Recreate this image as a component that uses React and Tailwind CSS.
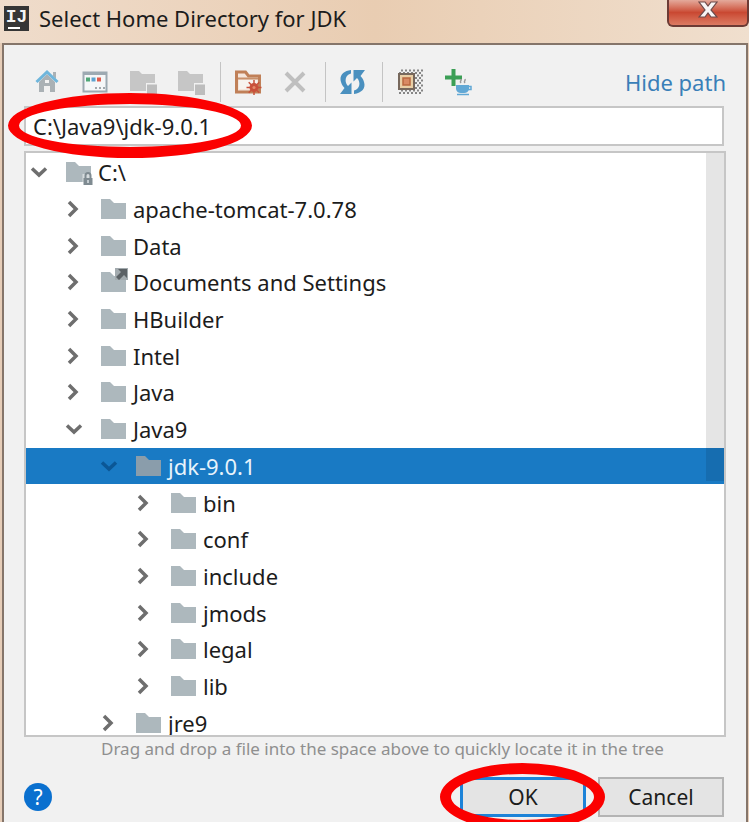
import { useState } from "react";

const ROWS = [
  { name: "C:\\", level: 0, open: true, badge: "lock" },
  { name: "apache-tomcat-7.0.78", level: 1 },
  { name: "Data", level: 1 },
  { name: "Documents and Settings", level: 1, badge: "link" },
  { name: "HBuilder", level: 1 },
  { name: "Intel", level: 1 },
  { name: "Java", level: 1 },
  { name: "Java9", level: 1, open: true },
  { name: "jdk-9.0.1", level: 2, open: true },
  { name: "bin", level: 3 },
  { name: "conf", level: 3 },
  { name: "include", level: 3 },
  { name: "jmods", level: 3 },
  { name: "legal", level: 3 },
  { name: "lib", level: 3 },
  { name: "jre9", level: 2 },
];

const INDENT = ["pl-0", "pl-[35px]", "pl-[70px]", "pl-[105px]"];

function Chevron({ open, selected }) {
  return (
    <svg
      className={`w-[26px] h-5 shrink-0 ${selected ? "text-[#0b5796]" : "text-[#6e6e6e]"}`}
      viewBox="0 0 26 20"
      fill="none"
      stroke="currentColor"
      strokeWidth={3.5}
    >
      <path d={open ? "M6 6.5l7 6.5 7-6.5" : "M8 3l7 7-7 7"} />
    </svg>
  );
}

function Folder({ badge, selected }) {
  return (
    <svg className="w-7 h-7 shrink-0" viewBox="0 0 28 28">
      <path
        d="M0 4h9l4 4h12v16H0z"
        fill={selected ? "#8a9dab" : "#adb8bd"}
      />
      {badge === "lock" && (
        <g>
          <path d="M16.500 16h10v12h-10z" fill="#fff" opacity=".5" />
          <path d="M19.500 21v-3.500a2.500 2.500 0 0 1 5 0V21" fill="none" stroke="#7f8b91" strokeWidth="2" />
          <path d="M17.500 20h9v7h-9z" fill="#7f8b91" />
          <path d="M21 22h2v3h-2z" fill="#c3cbcf" />
        </g>
      )}
      {badge === "link" && (
        <g>
          <path d="M14 0h13v12H14z" fill="#a3abaf" />
          <path d="M17 1h9v9l-3-3-5 5-3-3 5-5z" fill="#5c6266" />
        </g>
      )}
    </svg>
  );
}

function ToolButton({ label, children }) {
  return (
    <button type="button" aria-label={label} className="w-12 h-10 flex items-center justify-center">
      <svg className="w-7 h-7" viewBox="0 0 28 28" fill="none">
        {children}
      </svg>
    </button>
  );
}

function Separator() {
  return <span className="w-px h-10 mx-1 bg-[#c4c4c4]" />;
}

function GreyFolder() {
  return (
    <g fill="#c6c6c6">
      <path d="M0 3h9l3 3h13v9H16v8H0z" />
      <path d="M17 16.500h10V27H17z" fill="#bdbdbd" />
    </g>
  );
}

function Toolbar() {
  return (
    <div className="flex items-center">
      <ToolButton label="Home">
        <path d="M5 14l8-8 8 8v10h-5v-6h-6v6H5z" fill="#aab1b5" />
        <path d="M19 4h3v7l-3-3z" fill="#aab1b5" />
        <path d="M11 12h4v3h-4z" fill="#f2f2f2" />
        <path d="M2.500 14L13 4l10.500 10" stroke="#6fb6dc" strokeWidth="3" />
      </ToolButton>
      <ToolButton label="Desktop">
        <path d="M1.500 4.500h23v19h-23z" fill="#f5f7f8" stroke="#9daab2" strokeWidth="2" />
        <path d="M1 4h24v3H1z" fill="#9daab2" />
        <path d="M4 9.500h4v4H4z" fill="#4fa777" />
        <path d="M9.500 9.500h4v4h-4z" fill="#5fa3cf" />
        <path d="M15 9.500h4v4h-4z" fill="#e05b4b" />
        <path d="M13 19h2v2h-2zM17 19h2v2h-2zM21 19h2v2h-2z" fill="#a2a9ad" />
      </ToolButton>
      <ToolButton label="Project directory">
        <GreyFolder />
      </ToolButton>
      <ToolButton label="Module directory">
        <GreyFolder />
      </ToolButton>
      <Separator />
      <ToolButton label="New folder">
        <path d="M1.500 23V4h9l3 4h11v16h-23z" fill="#f5e6dc" stroke="#c08058" strokeWidth="3" />
        <path d="M3 10.500h20" stroke="#c9906b" strokeWidth="2" />
        <path d="M4 12h18v9H4z" fill="#f7f3ef" />
        <path
          d="M19 12v15M11.500 19.500h15M13.700 14.200l10.600 10.600M24.300 14.200L13.700 24.800"
          stroke="#c8503a"
          strokeWidth="1.500"
        />
        <circle cx="19" cy="19.500" r="4.500" fill="#c8503a" />
        <circle cx="19" cy="19.500" r="1.500" fill="#e58b6b" />
      </ToolButton>
      <ToolButton label="Delete">
        <path d="M3 5l18 18M21 5L3 23" stroke="#bfbfbf" strokeWidth="4" />
      </ToolButton>
      <Separator />
      <ToolButton label="Refresh">
        <path d="M11 2C3 3-1 8 1 14c.8 3 2 4.500 3.500 6L0 26h11.500V14.500L8 18C4 14 5 7 11 5.500z" fill="#4a90bf" />
        <path d="M14 26c8-1 12-6 10-12-.8-3-2-4.500-3.500-6L25 2H13.500v11.500L17 10c4 4 3 11-3 12.500z" fill="#4a90bf" />
      </ToolButton>
      <Separator />
      <ToolButton label="Show hidden files">
        <path
          d="M4 2.500h24M2 5h24M20 7.500h8M18 10h8M20 12.500h8M18 15h8M20 17.500h8M18 20h8M4 22.500h24M2 25h24"
          stroke="#858585"
          strokeWidth="2"
          strokeDasharray="2 2"
        />
        <path d="M2 6h15v15H2z" fill="#e9cfa5" stroke="#77685c" strokeWidth="2" />
        <path d="M6 10h7v7H6z" fill="#d98a63" stroke="#b9683f" strokeWidth="1.500" />
      </ToolButton>
      <ToolButton label="Add JDK">
        <path d="M8.500 1v17M0 9.500h17" stroke="#3c9f56" strokeWidth="4" />
        <path d="M11 17h13v4a5 5 0 0 1-5 4h-3a5 5 0 0 1-5-4z" fill="#62a8d5" />
        <path d="M23 18.500h3v3h-3" stroke="#62a8d5" strokeWidth="1.500" />
        <path d="M12 26.500h12" stroke="#62a8d5" strokeWidth="1.500" />
        <path d="M16 15c-2-2 1-2 0-4M20 15c-2-2 1-2 0-4" stroke="#9a9a9a" strokeWidth="1.500" />
      </ToolButton>
    </div>
  );
}

function Ring({ className }) {
  return <span className={`absolute pointer-events-none rounded-[50%] border-[11px] border-[#fb0000] ${className}`} />;
}

function TitleBar() {
  return (
    <header className="h-[43px] flex items-start justify-between pl-1 bg-linear-to-r from-[#efdccb] via-[#e9cdb2] to-[#f0dfce]">
      <div className="flex items-center gap-[10px] pt-1">
        <span className="relative w-[25px] h-[25px] bg-[#353535] text-[#f4f4f4] text-[18px] leading-[22px] font-bold text-center font-['Liberation_Mono',monospace]">
          IJ
          <span className="absolute left-1 bottom-[2px] w-3 h-[2px] bg-white" />
        </span>
        <h1 className="leading-7">Select Home Directory for JDK</h1>
      </div>
      <button
        type="button"
        aria-label="Close"
        className="w-[82px] h-[27px] flex items-start justify-center rounded-b-md border-2 border-t-0 border-[#6d3b35] bg-linear-to-b from-[#e3a99b] via-[#c94832] to-[#dc7a62]"
      >
        <svg className="w-5 h-5" viewBox="0 0 20 20">
          <path
            d="M1 2h6l3 4 3-4h6l-6 8 6 7h-6l-3-4-3 4H1l6-7z"
            fill="#f8f5f5"
            stroke="#6d4a4a"
            strokeWidth="1.200"
          />
        </svg>
      </button>
    </header>
  );
}

function Tree({ selected, onSelect }) {
  return (
    <div className="relative h-[586px] pt-px overflow-hidden bg-white border-2 border-[#c6c6c6]">
      <ul className="h-[587px] flex flex-col leading-6">
        {ROWS.map((row) => {
          const active = row.name === selected;
          return (
            <li key={row.name} className="flex-1 flex">
              <button
                type="button"
                onClick={() => onSelect(row.name)}
                className={`w-full flex items-center text-left ${INDENT[row.level]} ${active ? "bg-[#197ac4] text-[#e8f3fb]" : ""}`}
              >
                <Chevron open={row.open} selected={active} />
                <span className="pl-[14px] pr-1">
                  <Folder badge={row.badge} selected={active} />
                </span>
                <span className="whitespace-nowrap">{row.name}</span>
              </button>
            </li>
          );
        })}
      </ul>
      {/* Scrollbar thumb */}
      <span className="absolute right-0 top-0 w-[18px] h-[328px] bg-black/10 pointer-events-none" />
    </div>
  );
}

export default function App() {
  const [path, setPath] = useState("C:\\Java9\\jdk-9.0.1");
  const [selected, setSelected] = useState("jdk-9.0.1");

  return (
    <div className="min-h-screen flex flex-col overflow-hidden bg-[#e6cdb8] text-[#1c1c1c] text-[22px] leading-7 font-['Noto_Sans',sans-serif]">
      <TitleBar />
      <main className="flex-1 ml-[2px] mr-px border-2 border-b-0 border-[#85756a] bg-[#f1f1f1] pl-5 pr-5 pt-[17px]">
        <div className="flex items-center justify-between">
          <Toolbar />
          <a href="#path" className="text-[#3a7fb8]">
            Hide path
          </a>
        </div>
        <div className="relative mt-1 mr-[2px]">
          <input
            id="path"
            aria-label="Path"
            value={path}
            onChange={(e) => setPath(e.target.value)}
            className="block w-full h-10 px-[7px] bg-white border-2 border-[#c6c6c6] outline-none"
          />
          <Ring className="z-10 -left-4 -top-[13px] w-[244px] h-[65px]" />
        </div>
        <div className="mt-[5px]">
          <Tree selected={selected} onSelect={setSelected} />
        </div>
        <p className="pl-[77px] text-[17px] leading-6 text-[#8f8f8f]">
          Drag and drop a file into the space above to quickly locate it in the tree
        </p>
        <footer className="mt-4 h-10 flex items-center justify-between text-[21px]">
          <button
            type="button"
            aria-label="Help"
            className="w-7 h-7 rounded-full bg-[#0a70cf] text-white"
          >
            ?
          </button>
          <div className="flex gap-3 pr-[2px]">
            <div className="relative">
              <button type="button" className="w-[126px] h-10 bg-[#e4e4e4] border-3 border-[#1d83d8]">
                OK
              </button>
              <Ring className="-left-5 -top-[14px] w-[165px] h-[68px]" />
            </div>
            <button type="button" className="w-[126px] h-10 bg-[#e4e4e4] border-2 border-[#b4b4b4]">
              Cancel
            </button>
          </div>
        </footer>
      </main>
    </div>
  );
}
